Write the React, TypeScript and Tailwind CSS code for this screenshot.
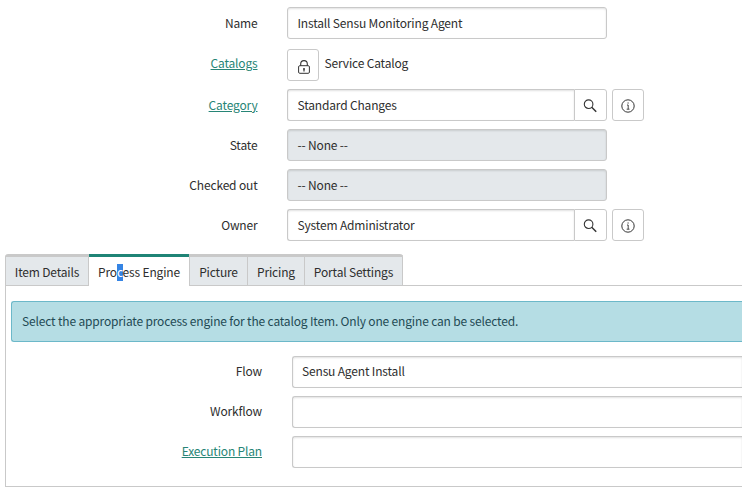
import type { ReactNode } from "react";

const CONTROL = "h-8 rounded-[3px] border border-[#c9c9c9]";

function Row({ label, link = false, children }: { label: string; link?: boolean; children?: ReactNode }) {
  return (
    <div className="flex h-8 items-center">
      <div
        className={
          link
            ? "w-[257.5px] shrink-0 text-right text-[#278576] underline underline-offset-[1px]"
            : "w-[257.5px] shrink-0 text-right"
        }
      >
        {label}
      </div>
      <div className="ml-[29.5px] flex items-center">{children}</div>
    </div>
  );
}

function TextField({ value, disabled = false }: { value: string; disabled?: boolean }) {
  return (
    <div
      className={`${CONTROL} flex w-80 items-center pl-[9.5px] shadow-[inset_0_1px_2px_rgba(0,0,0,0.12)] ${
        disabled ? "bg-[#e4e8eb]" : "bg-white"
      }`}
    >
      {value}
    </div>
  );
}

function SearchIcon() {
  return (
    <svg width="14" height="14" viewBox="0 0 14 14" fill="none" stroke="#343434">
      <circle cx="5.6" cy="5.2" r="4.3" strokeWidth="1.1" />
      <path d="M8.7 8.3L13.2 12.8" strokeWidth="1.5" />
    </svg>
  );
}

function InfoIcon() {
  return (
    <svg width="14" height="14" viewBox="0 0 14 14" fill="none" stroke="#343434">
      <circle cx="7" cy="7" r="6.2" strokeWidth="1" />
      <path d="M6 6H7.2V10.2M5.7 10.2H8.5" strokeWidth="0.9" />
      <path d="M6.5 4H7.7" strokeWidth="1.2" />
    </svg>
  );
}

function LockIcon() {
  return (
    <svg width="12" height="14" viewBox="0 0 12 14" fill="none" stroke="#343434">
      <rect x="0.6" y="5.7" width="10.8" height="7.6" rx="1.2" strokeWidth="1" />
      <path d="M2.7 5.7V3.9a3.3 3.3 0 0 1 6.6 0v1.8" strokeWidth="1.1" />
      <path d="M6 8.2V11.4M5 8.8H7" strokeWidth="1.2" />
    </svg>
  );
}

function ReferenceField({ value }: { value: string }) {
  return (
    <>
      <div className="flex h-8 w-[287px] items-center rounded-l-[3px] border border-r-0 border-[#c9c9c9] pl-[9.5px] shadow-[inset_0_1px_2px_rgba(0,0,0,0.12)]">
        {value}
      </div>
      <div className="flex h-8 w-[33px] items-center justify-center rounded-r-[3px] border border-[#c9c9c9] pt-[2px] pr-px">
        <SearchIcon />
      </div>
      <div className={`${CONTROL} ml-[5px] flex w-8 items-center justify-center pt-[2px]`}>
        <InfoIcon />
      </div>
    </>
  );
}

function Tab({ label, className }: { label: string; className: string }) {
  return (
    <div
      className={`h-8 shrink-0 border-t-[3px] border-r border-b border-[#c9c9c9] bg-[#e4e8eb] pt-[6px] text-center ${className}`}
    >
      {label}
    </div>
  );
}

function EngineRow({ label, value = "", link = false }: { label: string; value?: string; link?: boolean }) {
  return (
    <div className="flex h-8 items-center">
      <div
        className={
          link
            ? "w-64 shrink-0 pb-[2px] text-right text-[#278576] underline underline-offset-[1px]"
            : "w-64 shrink-0 pb-[2px] text-right"
        }
      >
        {label}
      </div>
      <div className="ml-[30px] flex h-8 grow items-center rounded-l-[3px] border border-r-0 border-[#c9c9c9] pb-[2px] pl-[9px] shadow-[inset_0_1px_2px_rgba(0,0,0,0.12)]">
        {value}
      </div>
    </div>
  );
}

export default function App() {
  return (
    <div className="h-[487px] w-[742px] overflow-hidden bg-white pt-[7px] font-['Noto_Sans_CJK_SC',sans-serif] text-[12px] leading-[18px] tracking-[-0.165px] whitespace-nowrap text-[#2e2e2e]">
      <div className="flex flex-col gap-2">
        <Row label="Name">
          <TextField value="Install Sensu Monitoring Agent" />
        </Row>
        <div className="flex h-[34px] items-start">
          <div className="w-[257.5px] pt-[7px] text-right text-[#278576] underline underline-offset-[1px]">Catalogs</div>
          <div className={`${CONTROL} mt-[2px] ml-[29.5px] flex w-8 items-center justify-center pt-[3px] pl-[2px]`}>
            <LockIcon />
          </div>
          <span className="ml-[5.5px] pt-[7px]">Service Catalog</span>
        </div>
        <Row label="Category" link>
          <ReferenceField value="Standard Changes" />
        </Row>
        <Row label="State">
          <TextField value="-- None --" disabled />
        </Row>
        <Row label="Checked out">
          <TextField value="-- None --" disabled />
        </Row>
        <Row label="Owner">
          <ReferenceField value="System Administrator" />
        </Row>
      </div>

      <div className="mt-[13px] ml-[5px] flex">
        <Tab label="Item Details" className="w-[84px] rounded-tl-[3px] border-l" />
        <div className="h-8 w-[100px] shrink-0 border-t-[3px] border-[#1f8476] pt-[6px] text-center">
          Pro<span className="bg-linear-to-b from-transparent from-[1px] to-[#3584e4] to-[1px] pb-px text-white">c</span>ess Engine
        </div>
        <Tab label="Picture" className="w-[59px] border-l" />
        <Tab label="Pricing" className="w-[57px]" />
        <Tab label="Portal Settings" className="w-[98px] rounded-tr-[3px]" />
        <div className="grow border-b border-[#c9c9c9]" />
      </div>

      <div className="ml-[5px] h-[201px] border-b border-l border-[#c9c9c9] pt-[15px]">
        <div className="ml-[5px] flex h-[41px] items-center rounded-l-[3px] border border-r-0 border-[#6cb8c9] bg-[#b5dde4] pb-[2px] pl-[10px] text-[#1f4a54]">
          Select the appropriate process engine for the catalog Item. Only one engine can be selected.
        </div>
        <div className="mt-[14px] flex flex-col gap-2">
          <EngineRow label="Flow" value="Sensu Agent Install" />
          <EngineRow label="Workflow" />
          <EngineRow label="Execution Plan" link />
        </div>
      </div>
    </div>
  );
}
